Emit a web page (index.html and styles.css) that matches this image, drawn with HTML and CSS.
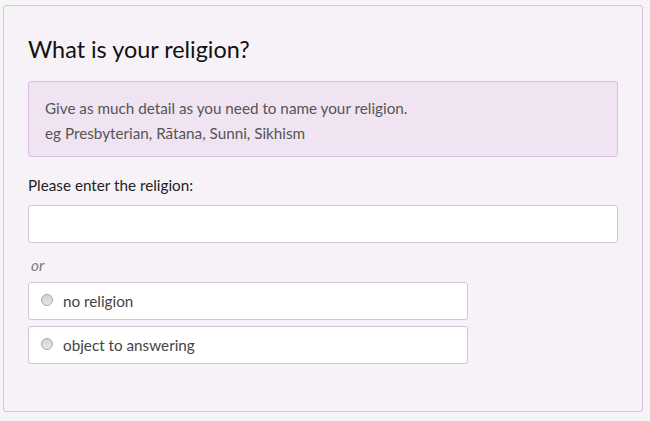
FILE: index.html
```html
<!DOCTYPE html>
<html>
<head>
<meta charset="utf-8">
<link rel="stylesheet" href="styles.css">
</head>
<body>
<div class="card">
  <h1 class="title">What is your religion?</h1>
  <div class="hint">
    <p>Give as much detail as you need to name your religion.</p>
    <p>eg Presbyterian, Rātana, Sunni, Sikhism</p>
  </div>
  <label class="label">Please enter the religion:</label>
  <div class="input"></div>
  <div class="or">or</div>
  <div class="options">
    <div class="option"><span class="radio"></span><span class="opt-text">no religion</span></div>
    <div class="option"><span class="radio"></span><span class="opt-text">object to answering</span></div>
  </div>
</div>
</body>
</html>
```
FILE: styles.css
```css
html, body {
  margin: 0;
  padding: 0;
  background: #f5f5f5;
}
body {
  padding: 5px 8px 9px 3px;
  font-family: Lato, "Noto Sans", sans-serif;
  color: #222;
}
.card {
  box-sizing: border-box;
  width: 640px;
  height: 407px;
  background: #f7f2f8;
  border: 1px solid #d6c1de;
  border-radius: 3px;
  padding: 29px 24px 0 24px;
}
.title {
  margin: 0;
  font-size: 23.4px;
  font-weight: 400;
  line-height: 28px;
  color: #111;
}
.hint {
  margin-top: 18px;
  width: 590px;
  box-sizing: border-box;
  height: 76px;
  background: #f0e4f2;
  border: 1px solid #d6bfe0;
  border-radius: 3px;
  padding: 14px 16px 0 16px;
  color: #555;
  font-size: 15.25px;
  line-height: 25px;
}
.hint p { margin: 0; }
.label {
  display: block;
  margin-top: 18px;
  font-size: 15.25px;
  line-height: 20px;
  color: #222;
}
.input {
  margin-top: 10px;
  width: 590px;
  height: 38px;
  box-sizing: border-box;
  background: #fff;
  border: 1px solid #d6c1de;
  border-radius: 3px;
}
.or {
  margin-top: 12px;
  margin-left: 3px;
  font-style: italic;
  font-size: 15.25px;
  line-height: 20px;
  color: #777;
}
.options {
  margin-top: 7px;
  display: flex;
  flex-direction: column;
  gap: 6px;
}
.option {
  box-sizing: border-box;
  width: 440px;
  height: 38px;
  background: #fff;
  border: 1px solid #d6c1de;
  border-radius: 3px;
  display: flex;
  align-items: center;
  padding-left: 12px;
}
.radio {
  width: 12px;
  height: 12px;
  margin-top: -2px;
  border-radius: 50%;
  border: 1px solid #a8a8a8;
  background: linear-gradient(#d4d4d4, #e6e6e6);
  box-sizing: border-box;
  flex: none;
}
.opt-text {
  margin-left: 10px;
  font-size: 15.25px;
  color: #444;
}
```
